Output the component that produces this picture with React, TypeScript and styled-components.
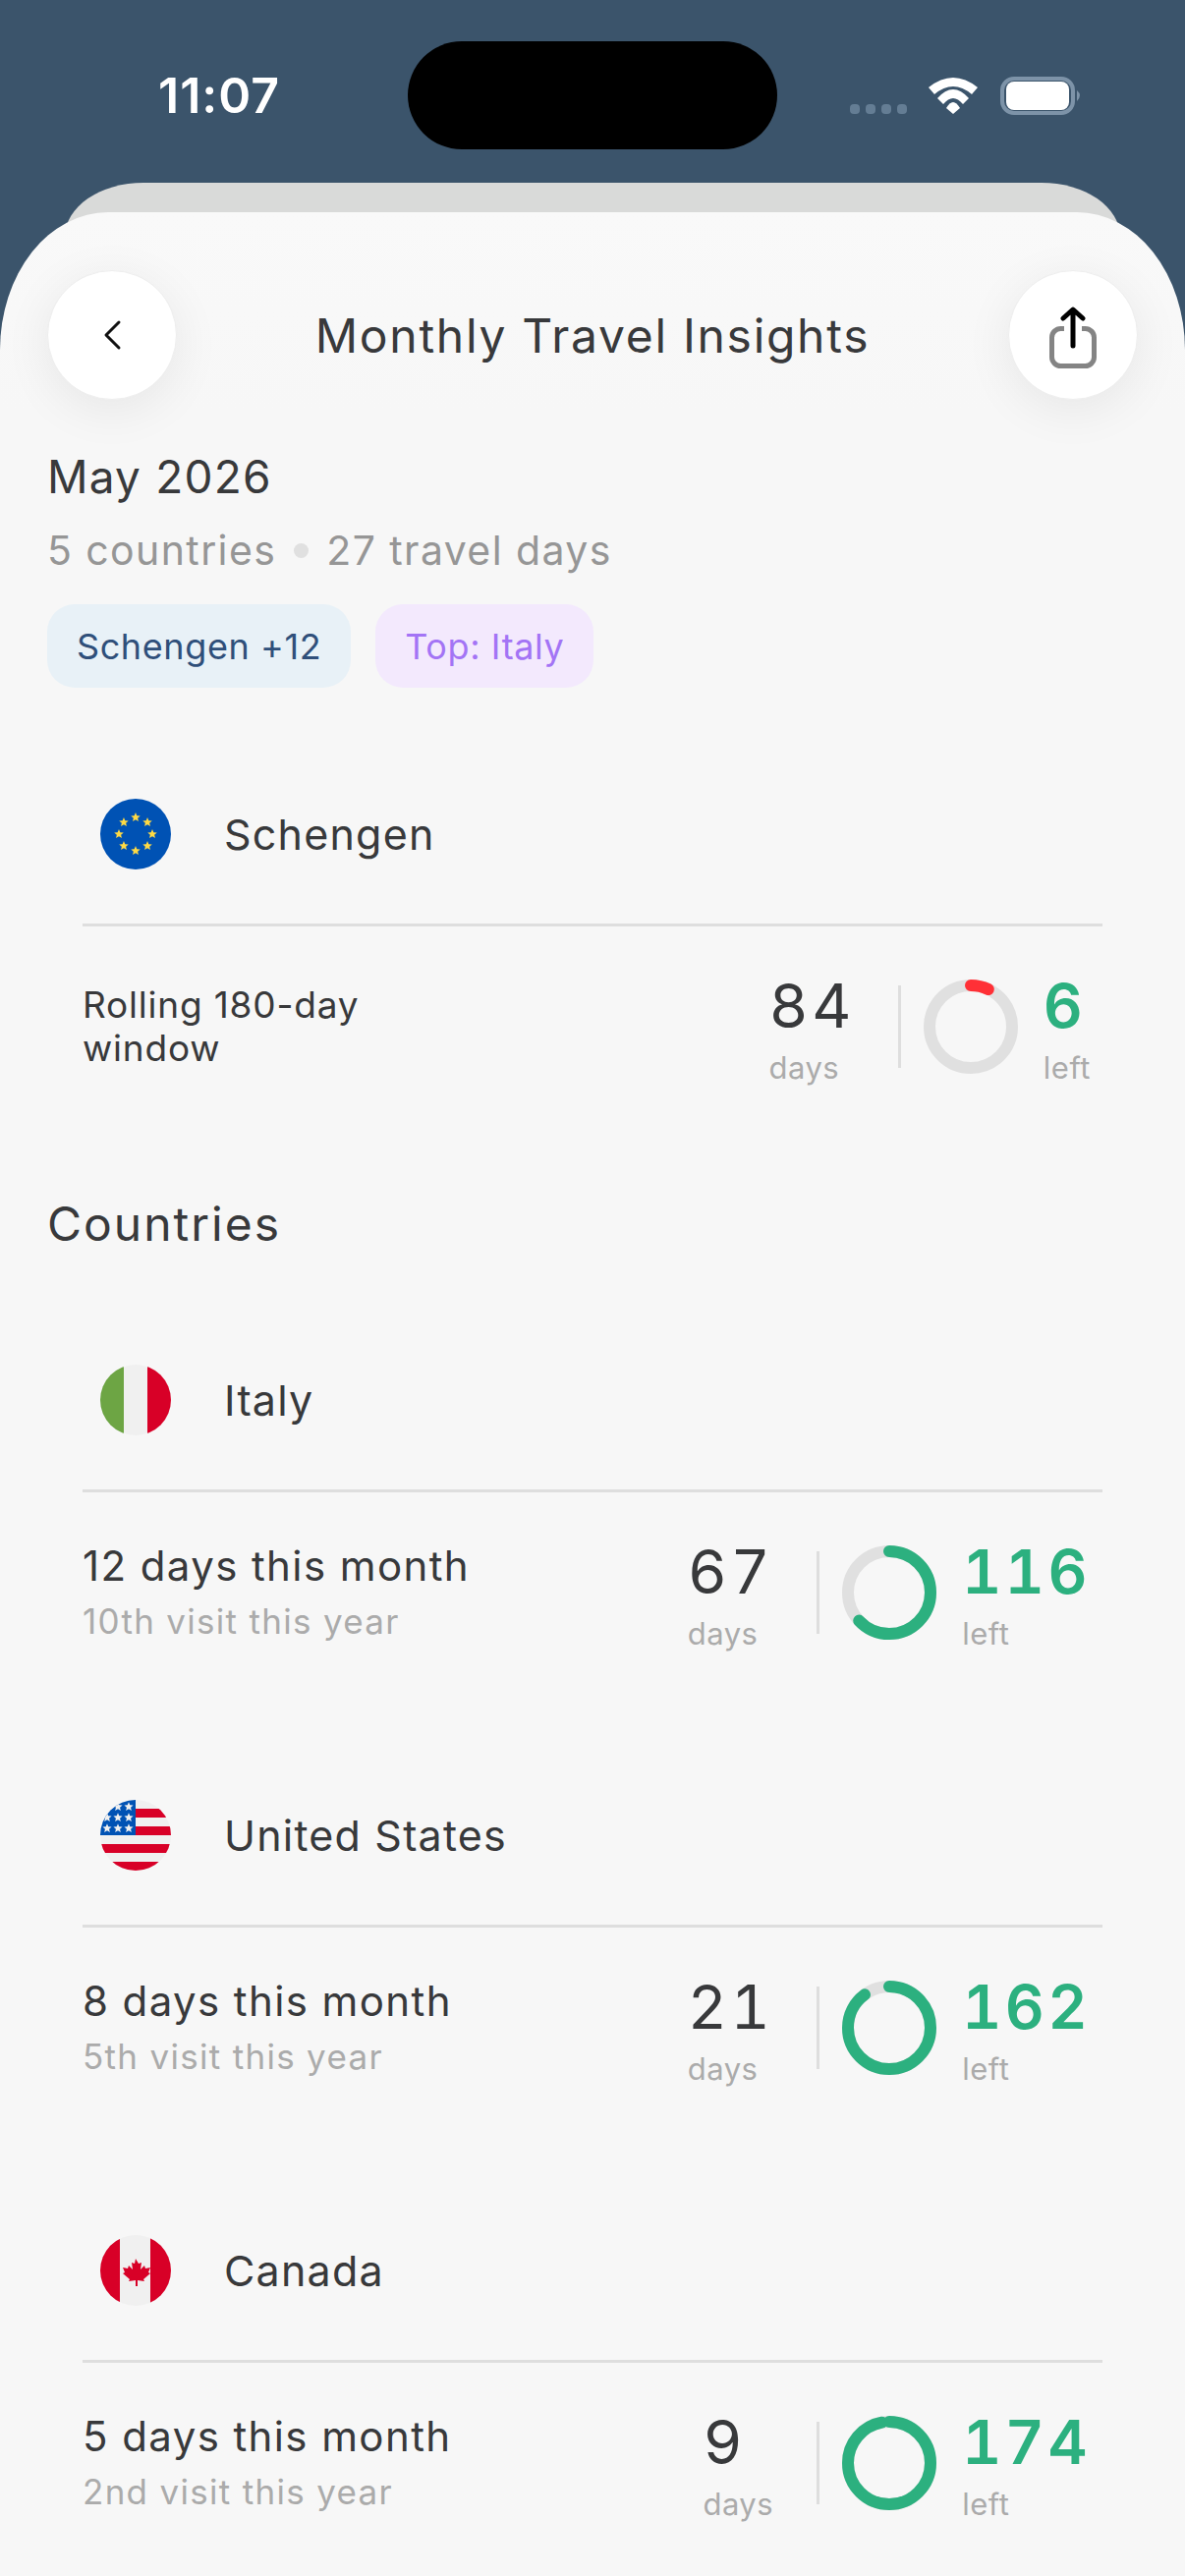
import React from 'react';
import styled, { createGlobalStyle } from 'styled-components';

interface CountryItem {
  name: string;
  flag: React.ReactNode;
  title: string;
  subtitle: string;
  days: number;
  left: number;
  progress: number;
}

const GlobalStyle = createGlobalStyle`
  html, body {
    margin: 0;
    padding: 0;
    background: #3b546b;
  }
  body {
    font-family: Inter, "Open Sans", "Liberation Sans", sans-serif;
    color: #38393b;
  }
`;

const Screen = styled.div`
  width: 1206px;
  height: 2622px;
  overflow: hidden;
  background: #3b546b;
`;

const StatusBar = styled.div`
  height: 186px;
  padding: 42px 101px 0 161px;
  box-sizing: border-box;
  display: flex;
  align-items: flex-start;
`;

const Clock = styled.div`
  width: 254px;
  font-size: 50px;
  line-height: 110px;
  height: 110px;
  font-weight: 600;
  letter-spacing: 1px;
  color: #fff;
`;

const Island = styled.div`
  width: 376px;
  height: 110px;
  border-radius: 55px;
  background: #000;
`;

const StatusIcons = styled.div`
  flex: 1;
  height: 110px;
  display: flex;
  justify-content: flex-end;
`;

const BackSheet = styled.div`
  height: 60px;
  margin: 0 66px;
  background: #d9dad9;
  border-radius: 80px 80px 0 0 / 55px 55px 0 0;
`;

const Sheet = styled.div`
  margin-top: -30px;
  position: relative;
  height: 2406px;
  background: linear-gradient(#f9f9f9, #f7f7f7 200px);
  border-radius: 110px 110px 0 0 / 140px 140px 0 0;
  padding: 59px 48px 0;
  box-sizing: border-box;
`;

const Header = styled.header`
  display: flex;
  align-items: center;
  justify-content: space-between;
  height: 132px;
`;

const RoundButton = styled.button`
  width: 132px;
  height: 132px;
  border: 1px solid #eeeeee;
  border-radius: 50%;
  background: #fff;
  box-shadow: 0 10px 50px rgba(0, 0, 0, 0.07);
  padding: 0;
  display: flex;
  align-items: center;
  justify-content: center;
`;

const ShareIcon = styled.svg`
  margin-top: 6px;
`;

const Title = styled.h1`
  margin: 0;
  padding-top: 2px;
  font-size: 48px;
  line-height: 60px;
  font-weight: 400;
  letter-spacing: 1.7px;
  color: #38393b;
`;

const Month = styled.div`
  margin-top: 48px;
  font-size: 46px;
  line-height: 60px;
  letter-spacing: 1.2px;
  color: #38393b;
`;

const Summary = styled.div`
  margin-top: 15px;
  display: flex;
  align-items: center;
  gap: 18px;
  font-size: 41px;
  line-height: 60px;
  letter-spacing: 1.4px;
  color: #969696;
`;

const Dot = styled.span`
  width: 15px;
  height: 15px;
  border-radius: 50%;
  background: #e0e0e0;
`;

const Chips = styled.div`
  margin-top: 25px;
  display: flex;
  gap: 25px;
`;

const Chip = styled.span<{ $bg: string; $fg: string }>`
  height: 85px;
  padding: 0 30px;
  border-radius: 28px;
  display: flex;
  align-items: center;
  font-size: 36px;
  letter-spacing: 0.6px;
  background: ${({ $bg }) => $bg};
  color: ${({ $fg }) => $fg};
`;

const Card = styled.section<{ $top: number }>`
  padding: 0 36px;
  margin-top: ${({ $top }) => $top}px;
`;

const CardHead = styled.div`
  height: 130px;
  padding-left: 18px;
  box-sizing: border-box;
  display: flex;
  gap: 54px;
  align-items: flex-start;
  border-bottom: 3px solid #dedede;
`;

const FlagWrap = styled.div`
  width: 72px;
  height: 72px;
  border-radius: 50%;
  overflow: hidden;
  svg {
    display: block;
  }
`;

const Name = styled.div`
  font-size: 43px;
  line-height: 72px;
  letter-spacing: 1.2px;
  color: #38393b;
`;

const CardBody = styled.div`
  padding-top: 46px;
  height: 112px;
  display: flex;
  align-items: center;
  justify-content: space-between;
`;

const Info = styled.div`
  padding-top: 2px;
  display: flex;
  flex-direction: column;
`;

const InfoTitle = styled.div`
  font-size: 42px;
  line-height: 54px;
  letter-spacing: 1.4px;
  color: #38393b;
`;

const InfoSub = styled.div`
  margin-top: 2px;
  font-size: 35px;
  line-height: 54px;
  letter-spacing: 1.3px;
  color: #ababab;
`;

const Rolling = styled.div`
  font-size: 37px;
  line-height: 44px;
  letter-spacing: 0.8px;
  color: #38393b;
  width: 320px;
`;

const Stats = styled.div`
  display: flex;
  align-items: center;
  padding-right: 12px;
`;

const Stat = styled.div<{ $minWidth?: number }>`
  min-width: ${({ $minWidth }) => $minWidth ?? 0}px;
  padding-top: 10px;
  display: flex;
  flex-direction: column;
`;

const Value = styled.div<{ $green?: boolean }>`
  font-size: 62px;
  line-height: 62px;
  letter-spacing: 3.5px;
  font-variant-numeric: tabular-nums;
  font-weight: ${({ $green }) => ($green ? 600 : 400)};
  color: ${({ $green }) => ($green ? '#2cb07f' : '#38393b')};
`;

const Unit = styled.div`
  margin-top: 12px;
  font-size: 31px;
  line-height: 40px;
  letter-spacing: 0.5px;
  color: #ababab;
`;

const VLine = styled.div`
  width: 3px;
  height: 84px;
  margin: 0 23px 0 44px;
  background: #dedede;
`;

const RingSvg = styled.svg`
  display: block;
  margin-right: 26px;
`;

const Heading = styled.h2`
  margin: 115px 0 0;
  font-size: 48px;
  line-height: 60px;
  font-weight: 400;
  letter-spacing: 2px;
  color: #38393b;
`;

const Ring = ({ progress, color }: { progress: number; color: string }) => {
  const c = 2 * Math.PI * 42;
  return (
    <RingSvg width="96" height="96" viewBox="0 0 96 96">
      <circle cx="48" cy="48" r="42" fill="none" stroke="#e0e0e0" strokeWidth="12" />
      <circle
        cx="48"
        cy="48"
        r="42"
        fill="none"
        stroke={color}
        strokeWidth="12"
        strokeLinecap="round"
        strokeDasharray={`${c * progress} ${c}`}
        transform="rotate(-90 48 48)"
      />
    </RingSvg>
  );
};

const Star = ({ x, y, r, fill }: { x: number; y: number; r: number; fill: string }) => {
  const points = Array.from({ length: 10 }, (_, i) => {
    const radius = i % 2 ? r * 0.45 : r;
    const a = (i * Math.PI) / 5;
    return `${x + radius * Math.sin(a)},${y - radius * Math.cos(a)}`;
  }).join(' ');
  return <polygon points={points} fill={fill} />;
};

const EuFlag = () => {
  const stars = Array.from({ length: 8 }, (_, i) => (i * Math.PI) / 4);
  return (
    <svg width="72" height="72" viewBox="0 0 72 72">
      <rect width="72" height="72" fill="#0052b4" />
      {stars.map(a => (
        <Star key={a} x={36 + 17 * Math.sin(a)} y={36 - 17 * Math.cos(a)} r={5} fill="#ffda44" />
      ))}
    </svg>
  );
};

const ItalyFlag = () => (
  <svg width="72" height="72" viewBox="0 0 72 72">
    <rect width="72" height="72" fill="#f0f0f0" />
    <rect width="24" height="72" fill="#6da544" />
    <rect x="48" width="24" height="72" fill="#d80027" />
  </svg>
);

const UsFlag = () => (
  <svg width="72" height="72" viewBox="0 0 72 72">
    <rect width="72" height="72" fill="#f0f0f0" />
    <rect x="36" y="9" width="36" height="9" fill="#d80027" />
    <rect x="36" y="27" width="36" height="9" fill="#d80027" />
    <rect y="45" width="72" height="9" fill="#d80027" />
    <rect y="63" width="72" height="9" fill="#d80027" />
    <rect width="36" height="36" fill="#0052b4" />
    {[7, 18, 29].map(y =>
      [7, 18, 29].map(x => <Star key={`${x}-${y}`} x={x} y={y} r={4.8} fill="#f0f0f0" />),
    )}
  </svg>
);

const CanadaFlag = () => (
  <svg width="72" height="72" viewBox="0 0 72 72">
    <rect width="72" height="72" fill="#f0f0f0" />
    <rect width="20" height="72" fill="#d80027" />
    <rect x="51" width="21" height="72" fill="#d80027" />
    <path
      d="M36 24l3 5 3-1-1 7 4-4 1 3 5-1-2 5 2 1-7 6 1 2-7-1v6h-2v-6l-7 1 1-2-7-6 2-1-2-5 5 1 1-3 4 4-1-7 3 1z"
      fill="#d80027"
    />
  </svg>
);

const countries: CountryItem[] = [
  {
    name: 'Italy',
    flag: <ItalyFlag />,
    title: '12 days this month',
    subtitle: '10th visit this year',
    days: 67,
    left: 116,
    progress: 0.63,
  },
  {
    name: 'United States',
    flag: <UsFlag />,
    title: '8 days this month',
    subtitle: '5th visit this year',
    days: 21,
    left: 162,
    progress: 0.897,
  },
  {
    name: 'Canada',
    flag: <CanadaFlag />,
    title: '5 days this month',
    subtitle: '2nd visit this year',
    days: 9,
    left: 174,
    progress: 0.97,
  },
];

const App: React.FC = () => (
  <Screen>
    <GlobalStyle />
    <StatusBar>
      <Clock>11:07</Clock>
      <Island />
      <StatusIcons>
        <svg width="240" height="110" viewBox="0 0 240 110">
          <g fill="#647d94">
            <rect x="0" y="64" width="10" height="10" rx="4" />
            <rect x="16" y="64" width="10" height="10" rx="4" />
            <rect x="32" y="64" width="10" height="10" rx="4" />
            <rect x="48" y="64" width="10" height="10" rx="4" />
          </g>
          <path d="M80 47Q105 27 130 47L124 54Q105 38 86 54Z" fill="#fff" />
          <path d="M89 58Q105 40 121 58L115 64Q105 52 95 64Z" fill="#fff" />
          <path d="M98 68Q105 56 112 68L105 74Z" fill="#fff" />
          <rect x="155" y="38" width="72" height="35" rx="12" fill="none" stroke="#7d93a8" strokeWidth="4" />
          <rect x="159" y="41" width="64" height="29" rx="8" fill="#fff" />
          <path d="M231 50Q237 55 231 61Z" fill="#7d93a8" />
        </svg>
      </StatusIcons>
    </StatusBar>
    <BackSheet />
    <Sheet>
      <Header>
        <RoundButton aria-label="Back">
          <svg width="20" height="32" viewBox="0 0 20 32">
            <path d="M17 3L4 16l13 13" fill="none" stroke="#111" strokeWidth="3" strokeLinecap="round" strokeLinejoin="round" />
          </svg>
        </RoundButton>
        <Title>Monthly Travel Insights</Title>
        <RoundButton aria-label="Share">
          <ShareIcon width="52" height="64" viewBox="0 0 52 64">
            <path d="M17 22.5H13.5a9 9 0 0 0-9 9v20a9 9 0 0 0 9 9h25a9 9 0 0 0 9-9v-20a9 9 0 0 0-9-9H35" fill="none" stroke="#848484" strokeWidth="5" />
            <path d="M26 40V4M16 12l10-9 10 9" fill="none" stroke="#000" strokeWidth="5" strokeLinecap="round" strokeLinejoin="round" />
          </ShareIcon>
        </RoundButton>
      </Header>
      <Month>May 2026</Month>
      <Summary>
        <span>5 countries</span>
        <Dot />
        <span>27 travel days</span>
      </Summary>
      <Chips>
        <Chip $bg="#e8f1f7" $fg="#2f4f7a">Schengen +12</Chip>
        <Chip $bg="#f3e9fd" $fg="#a374f5">Top: Italy</Chip>
      </Chips>
      <Card $top={113}>
        <CardHead>
          <FlagWrap><EuFlag /></FlagWrap>
          <Name>Schengen</Name>
        </CardHead>
        <CardBody>
          <Rolling>Rolling 180-day window</Rolling>
          <Stats>
            <Stat>
              <Value>84</Value>
              <Unit>days</Unit>
            </Stat>
            <VLine />
            <Ring progress={0.07} color="#ff3036" />
            <Stat $minWidth={46}>
              <Value $green>6</Value>
              <Unit>left</Unit>
            </Stat>
          </Stats>
        </CardBody>
      </Card>
      <Heading>Countries</Heading>
      {countries.map(({ name, flag, title, subtitle, days, left, progress }, i) => (
        <Card key={name} $top={i === 0 ? 113 : 155}>
          <CardHead>
            <FlagWrap>{flag}</FlagWrap>
            <Name>{name}</Name>
          </CardHead>
          <CardBody>
            <Info>
              <InfoTitle>{title}</InfoTitle>
              <InfoSub>{subtitle}</InfoSub>
            </Info>
            <Stats>
              <Stat>
                <Value>{days}</Value>
                <Unit>days</Unit>
              </Stat>
              <VLine />
              <Ring progress={progress} color="#2cb07f" />
              <Stat $minWidth={129}>
                <Value $green>{left}</Value>
                <Unit>left</Unit>
              </Stat>
            </Stats>
          </CardBody>
        </Card>
      ))}
    </Sheet>
  </Screen>
);

export default App;
